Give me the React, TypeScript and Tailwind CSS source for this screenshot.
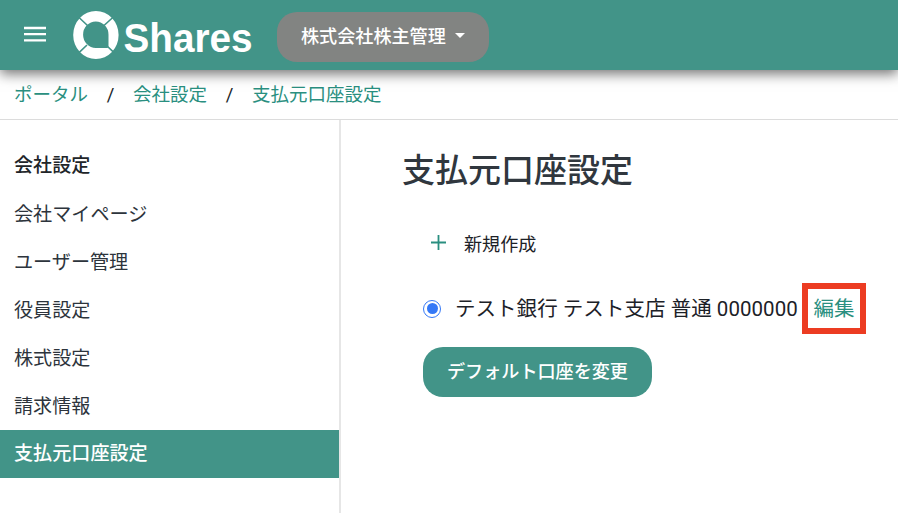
import React from 'react';

const menuItems = [
  '会社マイページ',
  'ユーザー管理',
  '役員設定',
  '株式設定',
  '請求情報',
  '支払元口座設定',
];

const Logo: React.FC = () => (
  <svg width="184" height="50" viewBox="0 0 184 50" className="ml-[26px] shrink-0 overflow-visible">
    <path
      fill="#fff"
      fillRule="evenodd"
      d="M23.900 1A22.700 24 0 1 1 23.900 49A22.700 24 0 1 1 23.900 1ZM23.800 11.500A12.700 13.200 0 0 0 23.800 37.900H35.200Q36.500 37.900 36.500 36.600V24.700A12.700 13.200 0 0 0 23.800 11.500Z"
    />
    <path d="M7 7.500L15.500 15.500M40.800 7.500L32 15.500M7 42.700L15 35M42 42.700L34.500 35.500" stroke="#429488" strokeWidth="1.6" />
    <text
      x="51.500"
      y="41.500"
      textLength="129"
      lengthAdjust="spacingAndGlyphs"
      fill="#fff"
      className="font-['Liberation_Sans',sans-serif] text-[41px] font-bold"
    >
      Shares
    </text>
  </svg>
);

const Header: React.FC = () => (
  <header className="relative z-10 flex h-[70px] shrink-0 items-center bg-[#429488] pl-6 text-white shadow-[0_4px_12px_rgba(0,0,0,0.55)]">
    <button type="button" aria-label="メニュー" className="-mt-0.5 w-[22px]">
      <svg width="22" height="16" viewBox="0 0 22 16" className="block">
        <path d="M0 2H22M0 8.200H22M0 14.400H22" stroke="#fff" strokeWidth="2.300" />
      </svg>
    </button>
    <Logo />
    <button
      type="button"
      className="mt-[3px] ml-[21px] flex h-[50px] w-[212px] items-center rounded-[20px] bg-[#828482] pl-6 text-[18.1px] font-medium"
    >
      <span className="pt-px">株式会社株主管理</span>
      <svg width="10" height="5" viewBox="0 0 10 5" className="mb-0.5 ml-[9px]">
        <path d="M0 0H10L5 5Z" fill="#fff" />
      </svg>
    </button>
  </header>
);

const Breadcrumb: React.FC = () => (
  <nav className="flex h-[50px] shrink-0 items-center border-b border-[#dcdcdc] pt-px pl-3.5 text-[18.5px] text-[#2a8f80]">
    <a>ポータル</a>
    <span className="w-[45px] text-center text-[#212529]">/</span>
    <a>会社設定</a>
    <span className="w-[45px] text-center text-[#212529]">/</span>
    <a>支払元口座設定</a>
  </nav>
);

const Sidebar: React.FC = () => (
  <aside className="w-[341px] shrink-0 border-r-2 border-[#e6e6e6] pt-[21px] text-[19.1px] text-[#2d343c]">
    <h2 className="flex h-[49px] items-center pl-3.5 font-medium text-[#212529]">会社設定</h2>
    <ul>
      {menuItems.map(item => (
        <li
          key={item}
          className={
            item === '支払元口座設定'
              ? 'flex h-12 items-center bg-[#429488] pb-px pl-3.5 font-medium text-white'
              : 'flex h-12 items-center pt-0.5 pl-3.5'
          }
        >
          {item}
        </li>
      ))}
    </ul>
  </aside>
);

const App: React.FC = () => {
  return (
    <div className="flex h-[513px] w-[898px] flex-col overflow-hidden bg-white font-[Roboto,'Noto_Sans_CJK_JP',sans-serif] leading-none text-[#1c2127]">
      <Header />
      <Breadcrumb />
      <div className="flex flex-1">
        <Sidebar />
        <main className="flex-1 pt-[30px] pl-[61px]">
          <h1 className="flex h-10 items-center text-[33px] font-medium text-[#30373e]">支払元口座設定</h1>
          <div className="mt-[33px] ml-[29px] flex h-11 items-center text-[18.1px]">
            <svg width="15" height="15" viewBox="0 0 15 15" className="mr-[18px] mb-[6px]">
              <path d="M7.500 0V15M0 7.500H15" stroke="#2a8f80" strokeWidth="1.8" />
            </svg>
            新規作成
          </div>
          <div className="mt-4 ml-[21px] flex h-[51px] items-center text-[20.5px]">
            <span className="mr-3.5 flex size-[18px] items-center justify-center rounded-full border-[1.5px] border-[#3478f6]">
              <span className="size-[11px] rounded-full bg-[#3478f6]" />
            </span>
            <span className="w-[347px] pt-0.5 tracking-[0.04px] whitespace-nowrap">テスト銀行 テスト支店 普通 0000000</span>
            <a className="flex h-[51px] w-16 items-center justify-center border-[6px] border-[#ec3c22] pt-0.5 text-[#2a8f80]">
              編集
            </a>
          </div>
          <button
            type="button"
            className="mt-[13px] ml-[21px] flex h-[50px] w-[229px] items-center justify-center rounded-[20px] bg-[#429488] pt-px text-[18.1px] font-medium text-white"
          >
            デフォルト口座を変更
          </button>
        </main>
      </div>
    </div>
  );
};

export default App;
